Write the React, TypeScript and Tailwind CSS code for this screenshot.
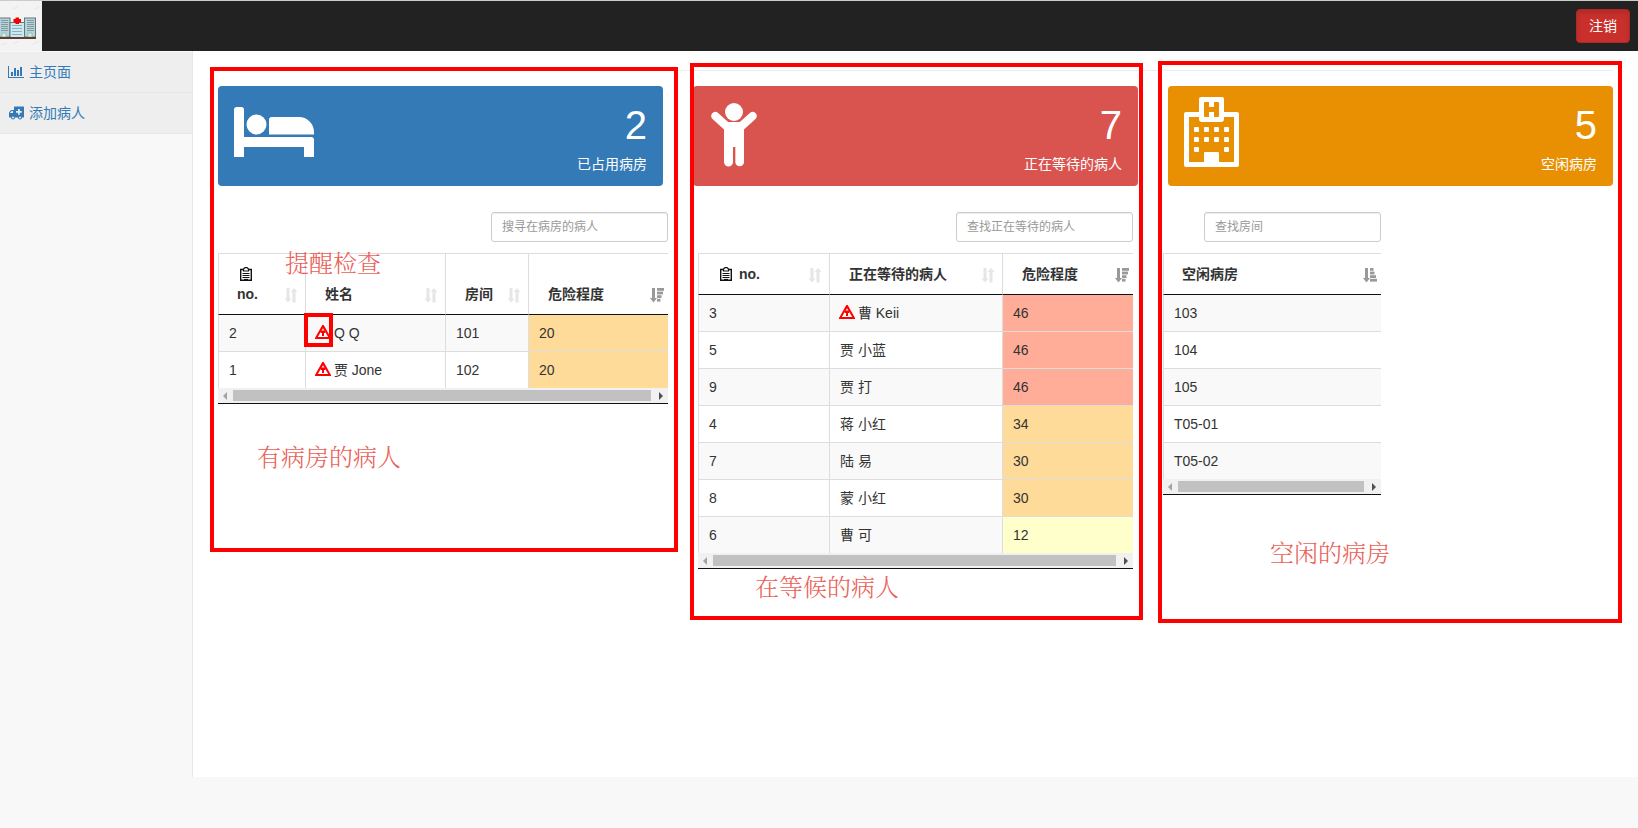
import type { ReactNode } from "react";

function BedIcon() {
  return (
    <svg className="mt-[9px] h-[50px] w-20" viewBox="0 256 2048 1280" fill="currentColor" aria-hidden="true">
      <path d="M256 1024h1728q26 0 45 19t19 45v448h-256v-256h-1536v256h-256v-1216q0-26 19-45t45-19h128q26 0 45 19t19 45v704zm576-320q0-106-75-181t-181-75-181 75-75 181 75 181 181 75 181-75 75-181zm1216 256v-64q0-159-112.5-271.5t-271.5-112.5h-704q-26 0-45 19t-19 45v384h1152z" />
    </svg>
  );
}

function ChildIcon() {
  return (
    <svg className="mt-[5px] ml-0.5 h-16 w-[46px]" viewBox="0 0 138 192" fill="currentColor" aria-hidden="true">
      <circle cx="69" cy="27" r="27" />
      <path d="M13 39 54 76M125 39 84 76" stroke="currentColor" strokeWidth="25" strokeLinecap="round" />
      <path d="M44 57H94L99 80V177a13 13 0 0 1-26 0V132H66V177a13 13 0 0 1-27 0V80Z" />
    </svg>
  );
}

function HospitalIcon() {
  return (
    <svg className="-mt-px h-[70px] w-[55px]" viewBox="0 0 55 70" fill="currentColor" aria-hidden="true">
      <path
        fillRule="evenodd"
        d="M17 0H38a2 2 0 0 1 2 2V15H53a2 2 0 0 1 2 2V68a2 2 0 0 1-2 2H2a2 2 0 0 1-2-2V17a2 2 0 0 1 2-2H15V2a2 2 0 0 1 2-2ZM20 6V19a1 1 0 0 0 1 1H25V15H30V20H34a1 1 0 0 0 1-1V6a1 1 0 0 0-1-1H30V10H25V5H21a1 1 0 0 0-1 1ZM5 20V65H20V56a1 1 0 0 1 1-1H34a1 1 0 0 1 1 1V65H50V20H40V22a3 3 0 0 1-3 3H18a3 3 0 0 1-3-3V20Z"
      />
      {[[10, 30], [20, 30], [30, 30], [40, 30], [10, 40], [20, 40], [30, 40], [40, 40], [10, 50], [40, 50]].map(([x, y]) => (
        <rect key={`${x}-${y}`} x={x} y={y} width="5" height="5" rx="1" />
      ))}
    </svg>
  );
}

function ChartIcon() {
  return (
    <svg className="h-3.5 w-4" viewBox="0 0 2048 1792" fill="currentColor" aria-hidden="true">
      <path d="M640 896v512h-256v-512h256zm384-512v1024h-256v-1024h256zm1024 1152v128h-2048v-1536h128v1408h1920zm-640-896v768h-256v-768h256zm384-384v1152h-256v-1152h256z" />
    </svg>
  );
}

function AmbulanceIcon() {
  return (
    <svg className="h-3.5 w-4" viewBox="0 0 2048 1792" fill="currentColor" aria-hidden="true">
      <path
        fillRule="evenodd"
        d="M2048 128V1408a64 64 0 0 1-64 64H1792a256 256 0 0 1-512 0H896a256 256 0 0 1-512 0H192a64 64 0 0 1-64-64V864q0-60 45-109l198-198q49-45 109-45H768V128a64 64 0 0 1 64-64H1984a64 64 0 0 1 64 64ZM640 640H482L256 866V896H640ZM512 1472a128 128 0 0 0 256 0a128 128 0 0 0-256 0ZM1408 1472a128 128 0 0 0 256 0a128 128 0 0 0-256 0ZM1280 384V640H1024V864H1280V1120H1504V864H1760V640H1504V384Z"
      />
    </svg>
  );
}

function ClipboardIcon() {
  return (
    <svg className="mx-[3px] inline-block h-3.5 w-3 align-[-2px]" viewBox="0 0 12 14" fill="none" stroke="#111" aria-hidden="true">
      <path d="M3.500 2.500H.7V13.300H11.300V2.500H8.500" strokeWidth="1.400" />
      <path d="M3.500 4V2L5 .6H7L8.500 2V4Z" strokeWidth="1.200" />
      <path d="M2.500 6.500H9.500M2.500 8.500H9.500M2.500 10.500H9.500" />
      <path d="M4 12.600H8" strokeWidth="1.400" />
    </svg>
  );
}

function AlertIcon() {
  return (
    <svg className="-mr-px -ml-px inline-block h-3.5 w-4 align-[-1px]" viewBox="0 0 16 14" aria-label="提醒检查" role="img">
      <path d="M7.300 0H8.700L16 13V14H0V13Z" fill="#f00" />
      <path d="M8 3.200 13.200 12H2.800Z" fill="#fff" />
      <path d="M5.800 5.500H10.200V8H9V11H7V8H5.800Z" fill="#f00" />
    </svg>
  );
}

type Sort = "both" | "desc" | "asc";

function SortIcon({ kind }: { kind: Sort }) {
  if (kind === "both") {
    return (
      <svg className="mb-px h-4 w-3.5 shrink-0 text-[#e6e6e6]" viewBox="0 0 14 16" fill="currentColor" aria-hidden="true">
        <path d="M2.500 1H5.500V11.500H7.500L4 15.500 .5 11.500H2.500ZM8.500 15.500H11.500V5H13.500L10 1 6.500 5H8.500Z" />
      </svg>
    );
  }
  const bars = kind === "desc" ? [7, 6, 4.500, 3.500] : [3.500, 4.500, 6, 7];
  return (
    <svg className="mb-px h-4 w-3.5 shrink-0 text-[#999]" viewBox="0 0 14 16" fill="currentColor" aria-hidden="true">
      <path d="M2 1H5V11H7L3.500 15.500 0 11H2Z" />
      {bars.map((w, i) => (
        <rect key={i} x="7" y={1 + i * 3.600} width={w} height="2.800" />
      ))}
    </svg>
  );
}

function HospitalLogo() {
  return (
    <svg className="h-[50px] w-[42px]" viewBox="0 0 42 50" role="img" aria-label="医院">
      <rect width="42" height="50" fill="#f3f3f3" />
      <path d="M13 8l6-3M34 8l5-2M1 44l5-2M13 43l6-3M33 43l6-3" stroke="#e6e6e6" />
      <rect x="-2" y="17" width="12" height="19" fill="#b5d3da" stroke="#68777b" />
      <rect x="24.500" y="17" width="11" height="19" fill="#b5d3da" stroke="#68777b" />
      <rect x="10" y="21.500" width="14.500" height="15" fill="#c9eaf2" stroke="#68777b" />
      <path d="M1 19.500H8M1 21.500H8M1 23.500H8M1 25.500H8M1 27.500H8M1 29.500H8M27 19.500H34M27 21.500H34M27 23.500H34M27 25.500H34M27 27.500H34M27 29.500H34" stroke="#8499a0" />
      <path d="M12 24.500H22M12 27.500H22M12 30.500H22M12 33.500H22" stroke="#8fb0b8" />
      <path d="M2 32H6V36H2ZM28 32H32V36H28Z" fill="#d4eef0" stroke="#9dbfb8" />
      <path d="M0 37H36" stroke="#5b402e" strokeWidth="2" />
      <path d="M15.500 16.500H19V23H15.500ZM13.500 18H21V21.500H13.500Z" fill="#f00000" />
    </svg>
  );
}

function StatCard({ tone, icon, value, label }: { tone: string; icon: ReactNode; value: number; label: string }) {
  return (
    <section className={`flex items-start justify-between rounded px-4 py-3 text-white ${tone}`}>
      {icon}
      <div className="text-right">
        <div className="mb-0.5 text-[40px] leading-[54px]">{value}</div>
        <div className="leading-5">{label}</div>
      </div>
    </section>
  );
}

type Column = { title: string; width: string; sort: Sort; icon?: boolean };
type Cell = { text: string; alert?: boolean; tone?: string };

function DataTable({ label, placeholder, columns, rows }: { label: string; placeholder: string; columns: Column[]; rows: Cell[][] }) {
  return (
    <section className="min-w-0 px-[15px]">
      <div className="flex justify-end">
        <input
          type="search"
          aria-label={placeholder}
          placeholder={placeholder}
          className="h-[30px] w-[177px] rounded-[3px] border border-[#ccc] bg-white px-2.5 text-xs shadow-[inset_0_1px_1px_rgba(0,0,0,0.075)] placeholder:text-[#999]"
        />
      </div>
      <div className="mt-[11px] border-b border-[#111]">
        <table aria-label={label} className="w-full table-fixed border-separate border-spacing-0 border-t border-[#ddd]">
          <colgroup>
            {columns.map((c) => (
              <col key={c.title} className={c.width} />
            ))}
          </colgroup>
          <thead>
            <tr>
              {columns.map((c) => (
                <th
                  key={c.title}
                  scope="col"
                  className="border-b border-l border-b-[#111] border-l-[#ddd] py-2.5 pr-[7px] pl-[18px] text-left align-bottom font-bold not-first:pl-[19px] last:pr-1"
                >
                  <div className="flex items-end justify-between gap-2.5">
                    <span>
                      {c.icon && <ClipboardIcon />} {c.title}
                    </span>
                    <SortIcon kind={c.sort} />
                  </div>
                </th>
              ))}
            </tr>
          </thead>
          <tbody className="[&>tr:nth-child(odd)]:bg-[#f9f9f9] [&>tr+tr>td]:border-t">
            {rows.map((row, i) => (
              <tr key={i}>
                {row.map((cell, j) => (
                  <td key={j} className={`border-l border-[#ddd] px-2.5 py-2 ${cell.tone ?? ""}`}>
                    {cell.alert && <AlertIcon />} {cell.text}
                  </td>
                ))}
              </tr>
            ))}
          </tbody>
        </table>
        <div className="flex h-[15px] items-center bg-[#f1f1f1]" aria-hidden="true">
          <svg className="mr-1.5 ml-[5px] h-2 w-1" viewBox="0 0 4 8" fill="#a3a3a3">
            <path d="M4 0V8L0 4Z" />
          </svg>
          <div className="h-[11px] flex-1 bg-[#c1c1c1]" />
          <svg className="mr-[5px] ml-2 h-2 w-1" viewBox="0 0 4 8" fill="#505050">
            <path d="M0 0V8L4 4Z" />
          </svg>
        </div>
      </div>
    </section>
  );
}

const HIGH = "bg-[#ffad99]";
const MEDIUM = "bg-[#ffdb99]";
const LOW = "bg-[#ffffcc]";

const patient = (no: string, name: string, risk: string, tone: string, alert = false): Cell[] => [
  { text: no },
  { text: name, alert },
  { text: risk, tone },
];

const admitted: Cell[][] = [
  [{ text: "2" }, { text: "Q Q", alert: true }, { text: "101" }, { text: "20", tone: MEDIUM }],
  [{ text: "1" }, { text: "贾 Jone", alert: true }, { text: "102" }, { text: "20", tone: MEDIUM }],
];

const waiting: Cell[][] = [
  patient("3", "曹 Keii", "46", HIGH, true),
  patient("5", "贾 小蓝", "46", HIGH),
  patient("9", "贾 打", "46", HIGH),
  patient("4", "蒋 小红", "34", MEDIUM),
  patient("7", "陆 易", "30", MEDIUM),
  patient("8", "蒙 小红", "30", MEDIUM),
  patient("6", "曹 可", "12", LOW),
];

const freeRooms: Cell[][] = ["103", "104", "105", "T05-01", "T05-02"].map((text) => [{ text }]);

function Frame({ place }: { place: string }) {
  return <div className={`pointer-events-none absolute border-4 border-[#f00] ${place}`} />;
}

function Note({ place, children }: { place: string; children: ReactNode }) {
  return (
    <p className={`pointer-events-none absolute font-['Noto_Serif_CJK_SC','Noto_Sans_CJK_SC',serif] text-2xl leading-8 font-light whitespace-nowrap text-[#ea6058] ${place}`}>
      {children}
    </p>
  );
}

export default function App() {
  return (
    <div className="min-h-screen bg-[#f8f8f8] font-['Liberation_Sans','Noto_Sans_CJK_SC',sans-serif] text-sm leading-5 text-[#333]">
      <header className="flex items-center justify-between border-t border-[#ccc] bg-[#222] pr-2">
        <a href="#home">
          <HospitalLogo />
        </a>
        <button type="button" className="h-[34px] rounded border border-[#ac2925] bg-[#c9302c] px-3 text-white shadow-[inset_0_3px_5px_rgba(0,0,0,0.125)]">
          注销
        </button>
      </header>
      <div className="flex">
        <nav className="w-48 shrink-0 pt-px">
          <ul>
            <li className="border-b border-[#e7e7e7] bg-[#eee]">
              <a href="#main" className="flex h-10 items-center gap-[5px] px-2 text-[#337ab7]">
                <ChartIcon />
                主页面
              </a>
            </li>
            <li className="border-b border-[#e7e7e7] bg-[#eee]">
              <a href="#add" className="flex h-10 items-center gap-[5px] px-2 text-[#337ab7]">
                <AmbulanceIcon />
                添加病人
              </a>
            </li>
          </ul>
        </nav>
        <main className="relative min-h-[726px] min-w-0 flex-1 border-l border-[#e7e7e7] bg-white px-2.5 pt-[19px]">
          <hr className="mx-[15px] border-[#eee]" />
          <div className="mt-[15px] grid grid-cols-3 gap-[30px] px-[15px]">
            <StatCard tone="bg-[#337ab7]" icon={<BedIcon />} value={2} label="已占用病房" />
            <StatCard tone="bg-[#d9534f]" icon={<ChildIcon />} value={7} label="正在等待的病人" />
            <StatCard tone="bg-[#e99002]" icon={<HospitalIcon />} value={5} label="空闲病房" />
          </div>
          <div className="mt-[26px] grid grid-cols-[480fr_465fr_248fr_232fr] items-start">
            <DataTable
              label="有病房的病人"
              placeholder="搜寻在病房的病人"
              columns={[
                { title: "no.", width: "w-[87px]", sort: "both", icon: true },
                { title: "姓名", width: "w-[140px]", sort: "both" },
                { title: "房间", width: "w-[83px]", sort: "both" },
                { title: "危险程度", width: "w-[140px]", sort: "desc" },
              ]}
              rows={admitted}
            />
            <DataTable
              label="在等候的病人"
              placeholder="查找正在等待的病人"
              columns={[
                { title: "no.", width: "w-[131px]", sort: "both", icon: true },
                { title: "正在等待的病人", width: "w-[173px]", sort: "both" },
                { title: "危险程度", width: "w-[131px]", sort: "desc" },
              ]}
              rows={waiting}
            />
            <DataTable
              label="空闲的病房"
              placeholder="查找房间"
              columns={[{ title: "空闲病房", width: "w-[218px]", sort: "asc" }]}
              rows={freeRooms}
            />
          </div>
          <Frame place="top-4 left-[17px] h-[485px] w-[468px]" />
          <Frame place="top-3 left-[497px] h-[557px] w-[453px]" />
          <Frame place="top-2.5 left-[965px] h-[562px] w-[464px]" />
          <Frame place="top-[262px] left-[111px] h-[34px] w-[29px]" />
          <Note place="top-[195px] left-[92px]">提醒检查</Note>
          <Note place="top-[389px] left-16">有病房的病人</Note>
          <Note place="top-[519px] left-[562px]">在等候的病人</Note>
          <Note place="top-[485px] left-[1077px]">空闲的病房</Note>
        </main>
      </div>
    </div>
  );
}
